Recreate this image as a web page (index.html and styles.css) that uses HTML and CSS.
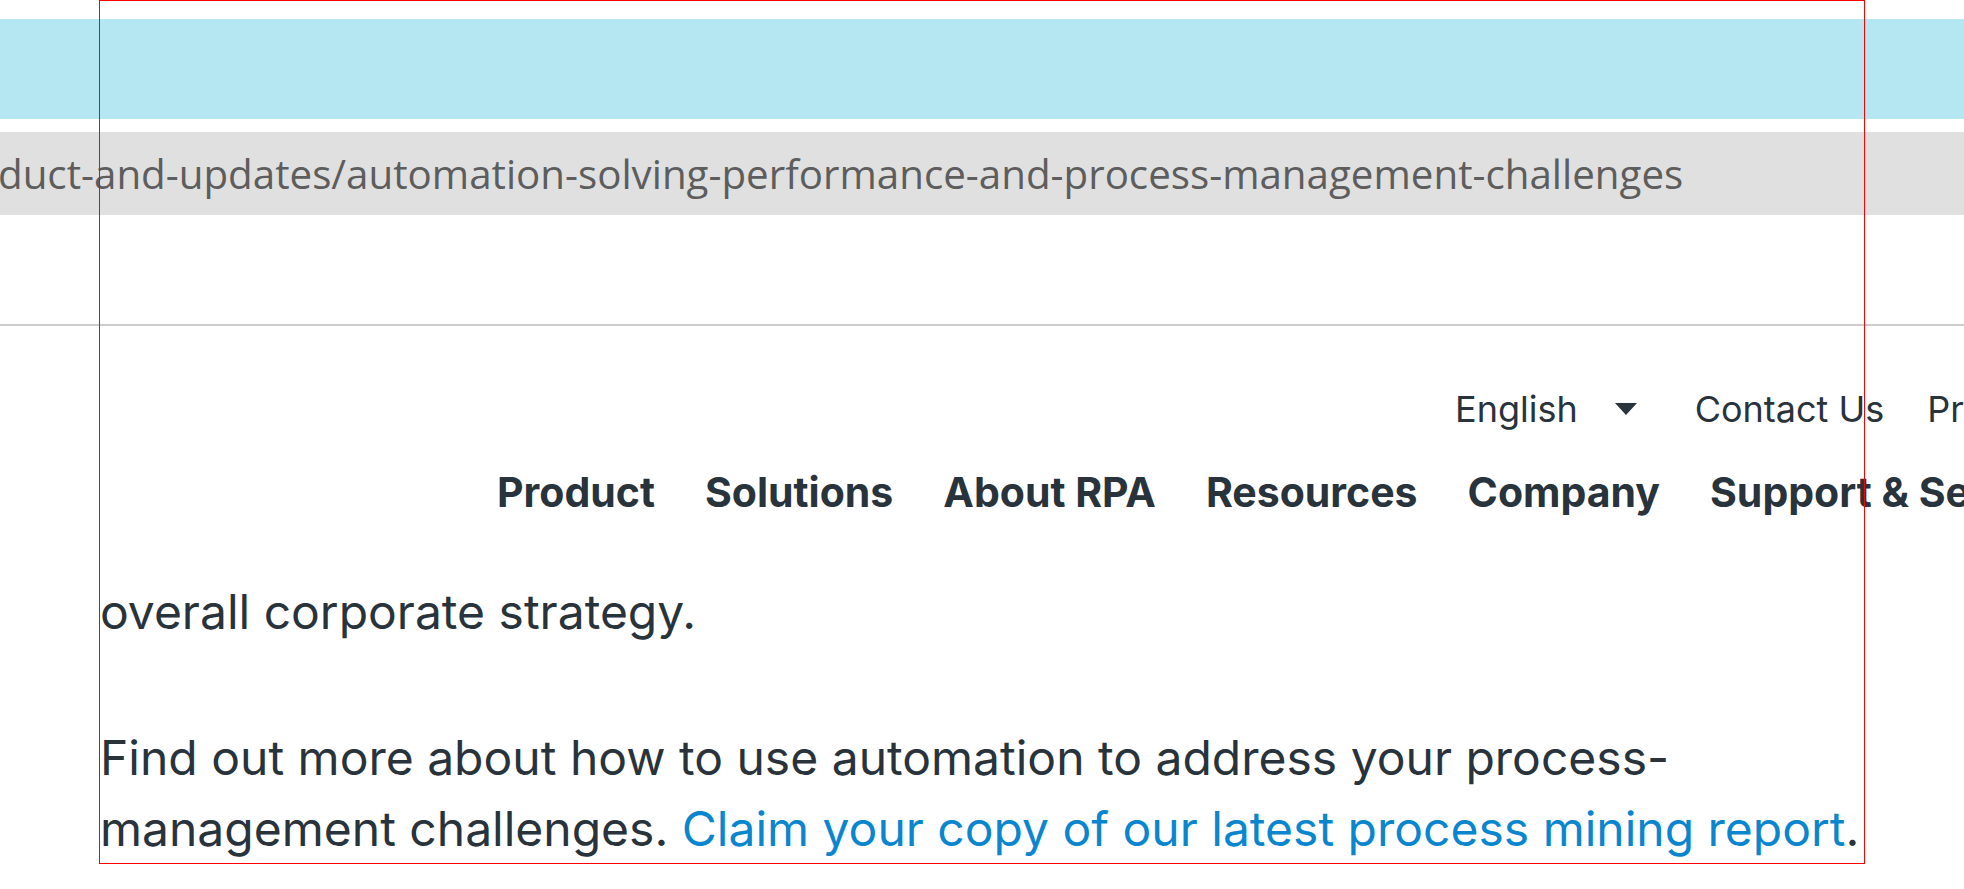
FILE: index.html
```html
<!DOCTYPE html>
<html lang="en">
<head>
<meta charset="utf-8">
<title>Automation solving performance and process management challenges</title>
<link rel="stylesheet" href="styles.css">
</head>
<body>
<div class="page">
  <div class="banner"></div>
  <div class="urlbar"><span class="url">duct-and-updates/automation-solving-performance-and-process-management-challenges</span></div>
  <div class="spacer"></div>
  <header class="site-header">
    <div class="utility">
      <a class="lang" href="#">English <span class="caret"></span></a>
      <a class="util-link contact" href="#">Contact Us</a>
      <a class="util-link more" href="#">Pricing</a>
    </div>
    <nav class="mainnav">
      <a href="#">Product</a>
      <a href="#">Solutions</a>
      <a href="#">About RPA</a>
      <a href="#">Resources</a>
      <a href="#">Company</a>
      <a href="#">Support &amp; Services</a>
    </nav>
  </header>
  <main class="article">
    <p>overall corporate strategy.</p>
    <p>Find out more about how to use automation to address your process-<br>management challenges. <a class="inline-link" href="#">Claim your copy of our latest process mining report</a>.</p>
  </main>
  <div class="frame"></div>
</div>
</body>
</html>
```

FILE: styles.css
```css
html, body {
  margin: 0;
  padding: 0;
  background: #ffffff;
  overflow: hidden;
}
.page {
  position: relative;
  width: 1964px;
  height: 889px;
  overflow: hidden;
  font-family: "Inter", "Liberation Sans", sans-serif;
  color: #29333c;
}
.banner {
  margin-top: 19px;
  height: 100px;
  background: #b5e7f2;
}
.urlbar {
  margin-top: 13px;
  height: 83px;
  background: #e0e0e0;
  display: flex;
  align-items: center;
  overflow: hidden;
}
.url {
  font-family: "Open Sans", "Noto Sans", sans-serif;
  font-size: 40.3px;
  color: #5d5d5d;
  white-space: nowrap;
  margin-left: -2px;
}
.spacer {
  height: 109px;
  border-bottom: 2px solid #cccccc;
}
.site-header {
  white-space: nowrap;
}
.utility {
  display: flex;
  align-items: center;
  padding-left: 1455px;
  height: 64px;
  margin-top: 51px;
  font-size: 36px;
}
.utility a {
  color: #29333c;
  text-decoration: none;
}
.lang {
  display: flex;
  align-items: center;
}
.caret {
  display: inline-block;
  width: 0;
  height: 0;
  margin-left: 37px;
  border-left: 11.5px solid transparent;
  border-right: 11.5px solid transparent;
  border-top: 12px solid #29333c;
}
.contact {
  margin-left: 58px;
}
.more {
  margin-left: 43px;
}
.mainnav {
  display: flex;
  gap: 50px;
  padding-left: 497px;
  margin-top: 21px;
  font-size: 41px;
  font-weight: 700;
  height: 60px;
  align-items: center;
}
.mainnav a {
  color: #29333c;
  text-decoration: none;
}
.article {
  padding-top: 54px;
  padding-left: 100px;
  font-size: 48px;
  line-height: 71px;
}
.article p {
  margin: 0 0 75px 0;
}
.inline-link {
  color: #0a86cf;
  text-decoration: none;
}
.frame {
  position: absolute;
  left: 99px;
  top: 0;
  width: 1764px;
  height: 862px;
  border: 1px solid #ff0000;
  pointer-events: none;
}
```
